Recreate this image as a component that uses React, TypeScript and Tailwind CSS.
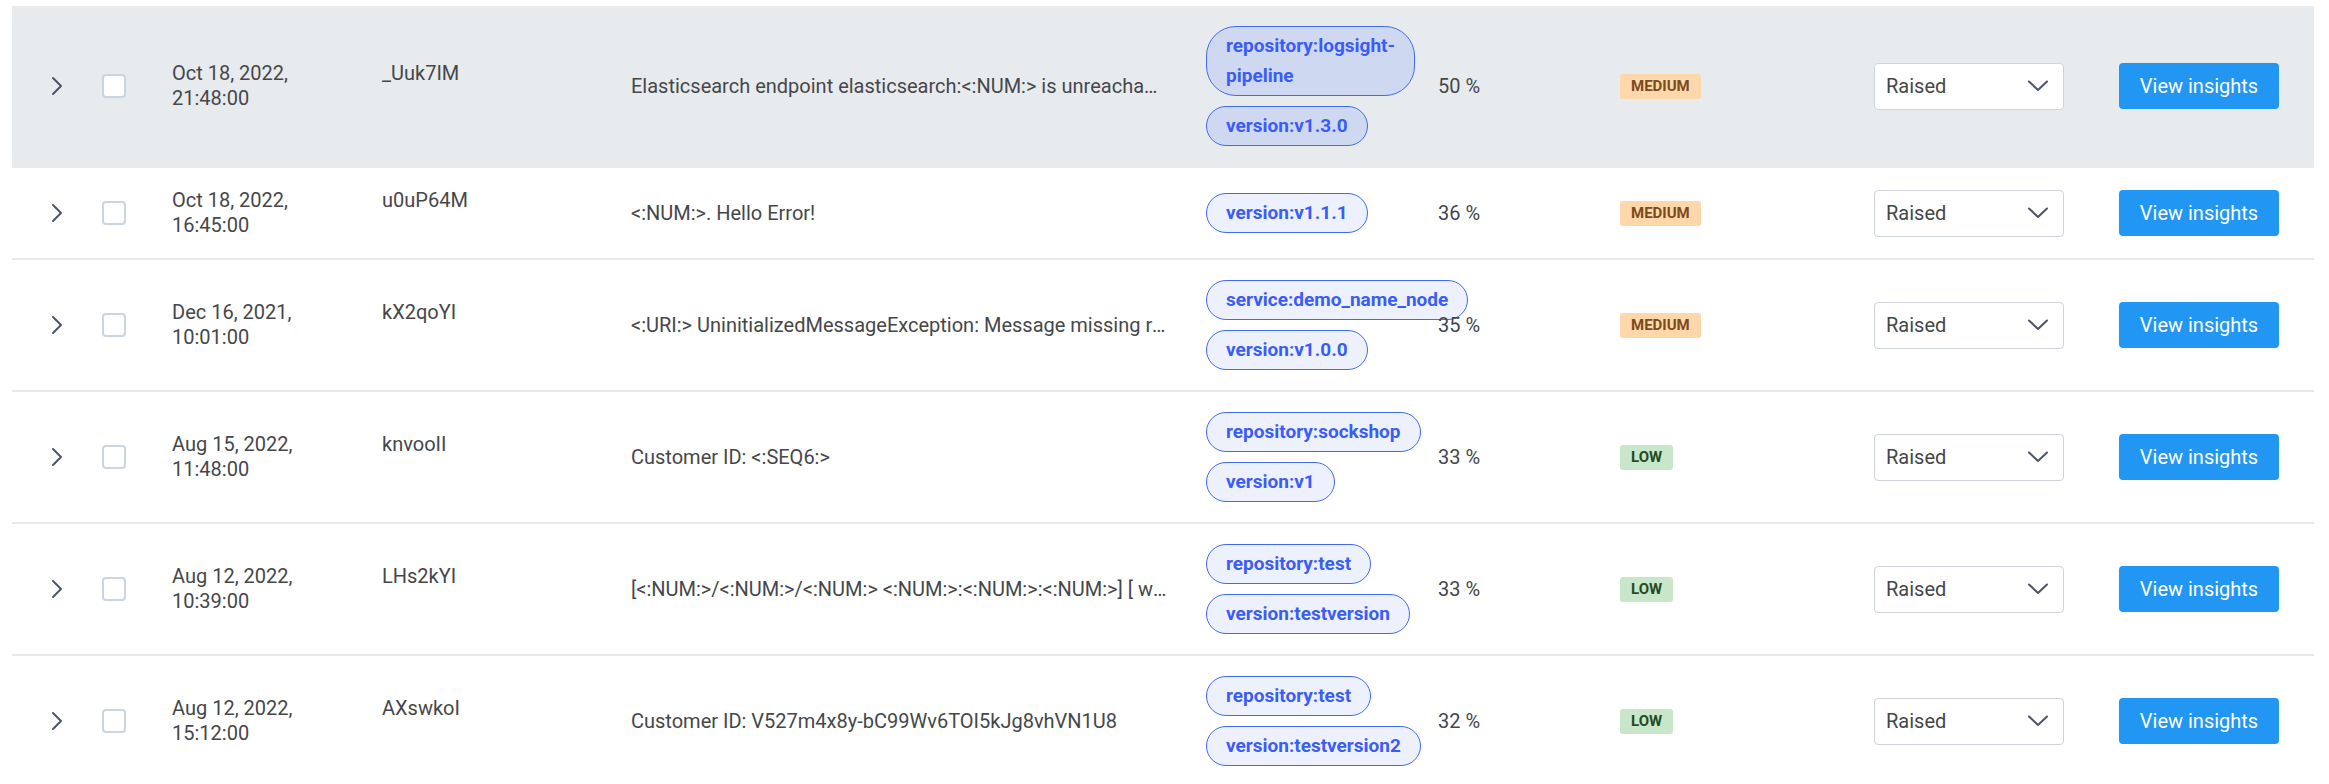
import React from "react";

type Row = {
  date1: string;
  date2: string;
  id: string;
  desc: string;
  chips: string[];
  pct: string;
  level: "MEDIUM" | "LOW";
  hover?: boolean;
};

const rows: Row[] = [
  {
    date1: "Oct 18, 2022,",
    date2: "21:48:00",
    id: "_Uuk7IM",
    desc: "Elasticsearch endpoint elasticsearch:<:NUM:> is unreachable",
    chips: ["repository:logsight-pipeline", "version:v1.3.0"],
    pct: "50 %",
    level: "MEDIUM",
    hover: true,
  },
  {
    date1: "Oct 18, 2022,",
    date2: "16:45:00",
    id: "u0uP64M",
    desc: "<:NUM:>. Hello Error!",
    chips: ["version:v1.1.1"],
    pct: "36 %",
    level: "MEDIUM",
  },
  {
    date1: "Dec 16, 2021,",
    date2: "10:01:00",
    id: "kX2qoYI",
    desc: "<:URI:> UninitializedMessageException: Message missing required fields",
    chips: ["service:demo_name_node", "version:v1.0.0"],
    pct: "35 %",
    level: "MEDIUM",
  },
  {
    date1: "Aug 15, 2022,",
    date2: "11:48:00",
    id: "knvooII",
    desc: "Customer ID: <:SEQ6:>",
    chips: ["repository:sockshop", "version:v1"],
    pct: "33 %",
    level: "LOW",
  },
  {
    date1: "Aug 12, 2022,",
    date2: "10:39:00",
    id: "LHs2kYI",
    desc: "[<:NUM:>/<:NUM:>/<:NUM:> <:NUM:>:<:NUM:>:<:NUM:>] [ warn ] worker process exited",
    chips: ["repository:test", "version:testversion"],
    pct: "33 %",
    level: "LOW",
  },
  {
    date1: "Aug 12, 2022,",
    date2: "15:12:00",
    id: "AXswkoI",
    desc: "Customer ID: V527m4x8y-bC99Wv6TOI5kJg8vhVN1U8",
    chips: ["repository:test", "version:testversion2"],
    pct: "32 %",
    level: "LOW",
  },
];

function ChevronRight() {
  return (
    <svg width="12" height="20" viewBox="0 0 12 20" fill="none">
      <path d="M2 2 L10 10 L2 18" stroke="#4a5568" strokeWidth="2" strokeLinecap="round" strokeLinejoin="round" />
    </svg>
  );
}

function ChevronDown() {
  return (
    <svg width="22" height="12" viewBox="0 0 22 12" fill="none">
      <path d="M2 1.5 L11 10 L20 1.5" stroke="#4a5568" strokeWidth="2" strokeLinecap="round" strokeLinejoin="round" />
    </svg>
  );
}

export default function App() {
  return (
    <div
      className="min-h-screen bg-white pt-[6px] px-[12px] text-[20px] text-[#45474b]"
      style={{ fontFamily: "Roboto, 'Noto Sans', sans-serif" }}
    >
      <div className="w-[2302px]">
        {rows.map((r, i) => (
          <div
            key={i}
            className={`grid grid-cols-[78px_70px_210px_249px_575px_232px_182px_254px_245px_207px] items-center py-[20px] border-b-2 ${
              r.hover ? "bg-[#e8ebee] border-[#e8ebee]" : "bg-white border-[#e6e9ec]"
            }`}
          >
            <div className="pl-[39px] flex items-center">
              <ChevronRight />
            </div>
            <div className="pl-[12px] flex items-center">
              <div className="w-[24px] h-[24px] rounded-[4px] border-2 border-[#cbd5e0] bg-white" />
            </div>
            <div className="pl-[12px] leading-[25px]">
              <div>{r.date1}</div>
              <div>{r.date2}</div>
            </div>
            <div className="pl-[12px] leading-[25px] h-[50px]">{r.id}</div>
            <div className="pl-[12px]">
              <div className="w-[536px] truncate leading-[25px]">{r.desc}</div>
            </div>
            <div className="pl-[12px]">
              <div className="w-[205px] flex flex-col items-start gap-[10px]">
                {r.chips.map((c) => (
                  <span
                    key={c}
                    className={`inline-block px-[19px] py-[4px] rounded-[30px] border border-[#4169f5] text-[19px] font-bold leading-[30px] text-[#3a5cf7] ${
                      r.hover ? "bg-[#cfd8f1]" : "bg-[#edf1fe]"
                    }`}
                  >
                    {c}
                  </span>
                ))}
              </div>
            </div>
            <div className="pl-[12px] leading-[25px]">{r.pct}</div>
            <div className="pl-[12px] flex">
              {r.level === "MEDIUM" ? (
                <span className="inline-block px-[11px] h-[25px] leading-[25px] rounded-[3px] bg-[#fed7aa] text-[#7b4a1d] text-[15px] font-bold">
                  MEDIUM
                </span>
              ) : (
                <span className="inline-block px-[11px] h-[25px] leading-[25px] rounded-[3px] bg-[#c8e6c9] text-[#1f4d22] text-[15px] font-bold">
                  LOW
                </span>
              )}
            </div>
            <div className="pl-[12px]">
              <div className="w-[190px] h-[47px] bg-white border border-[#cfd4da] rounded-[4px] flex items-center justify-between pl-[11px] pr-[14px]">
                <span>Raised</span>
                <ChevronDown />
              </div>
            </div>
            <div className="pl-[12px]">
              <button className="w-[160px] h-[46px] rounded-[4px] bg-[#2196f3] text-white text-[20px]">
                View insights
              </button>
            </div>
          </div>
        ))}
      </div>
    </div>
  );
}
